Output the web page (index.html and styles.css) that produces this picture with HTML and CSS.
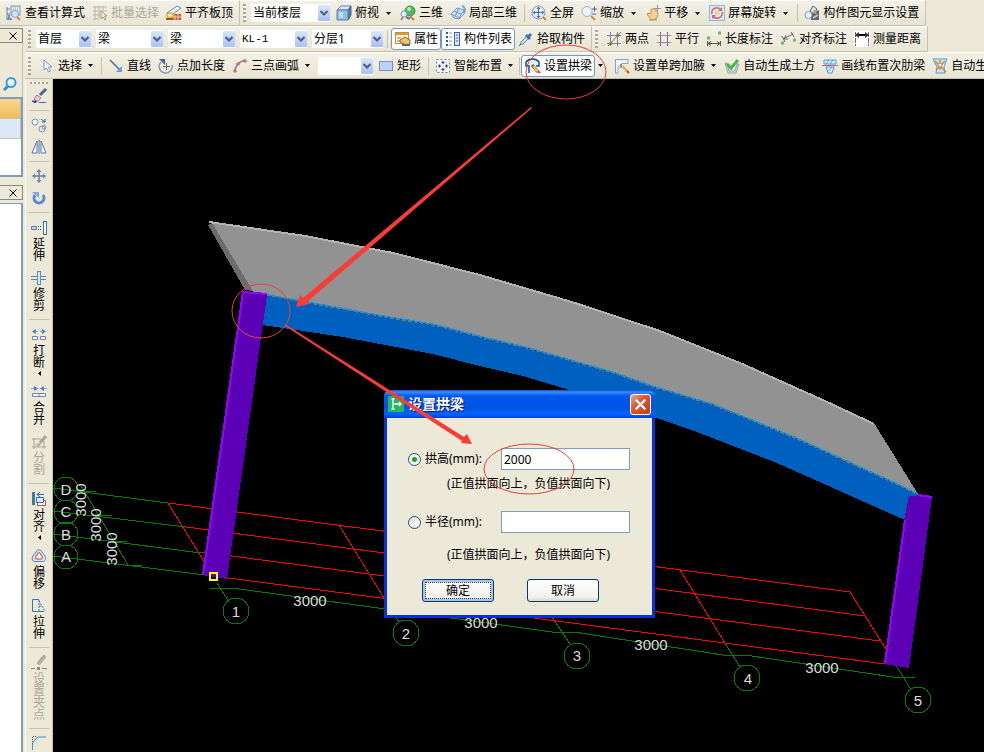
FILE: index.html
```html
<!DOCTYPE html>
<html lang="zh-CN">
<head>
    <meta charset="UTF-8">
    <meta name="viewport" content="width=device-width, initial-scale=1.0">
    <title>设置拱梁</title>
    <link rel="stylesheet" href="styles.css">
</head>
<body>
    <!-- Shared shapes -->
    <svg class="defs" aria-hidden="true">
        <defs>
            <linearGradient id="chevBg" x1="0" y1="0" x2="0" y2="1">
                <stop offset="0" stop-color="#dbe6fd"/>
                <stop offset="1" stop-color="#a9c0f3"/>
            </linearGradient>
            <symbol id="chev" viewBox="0 0 12 16">
                <rect x="0" y="0" width="12" height="16" rx="1" fill="url(#chevBg)"/>
                <path d="M2.500 6l3.500 3.500L9.500 6" fill="none" stroke="#4d6185" stroke-width="2.200"/>
            </symbol>
            <symbol id="down" viewBox="0 0 5 3"><path d="M0 0h5L2.500 3z" fill="#000"/></symbol>
            <symbol id="left" viewBox="0 0 3 5"><path d="M3 0v5L0 2.500z" fill="#000"/></symbol>
            <symbol id="cross" viewBox="0 0 8 8"><path d="M.5.5l7 7M7.500.5l-7 7" stroke="#000" fill="none"/></symbol>
        </defs>
    </svg>

    <div class="toolbar-row top-row">
        <div class="toolbar first">
            <button type="button" class="tool">
                <svg class="icon" viewBox="0 0 16 16"><path d="M1 2v13M1 14h4M1 4h3M1 9h3" stroke="#5c83b8" fill="none"/><rect x="5" y="1" width="9" height="9" fill="#e8edf5" stroke="#7e92b0"/><path d="M7 3h1M9 3h1M11 3h1M7 5h1M9 5h1M11 5h1" stroke="#8a94a8"/><circle cx="9" cy="9" r="3.500" fill="#cfe4fa" stroke="#7d9cc4"/><path d="M11 12l3 3" stroke="#d18b3f" stroke-width="2"/><path d="M3 10v4h3" stroke="#6c92c6" fill="none" stroke-width="2"/></svg>
                查看计算式
            </button>
            <button type="button" class="tool" disabled>
                <svg class="icon" viewBox="0 0 16 16"><path d="M1 2h14M1 6h14M1 10h7M1 14h6M3 1v14M7 1v12M11 1v5" stroke="#bab7a7" fill="none"/><path d="M9 6v8l2-2 2 3 1-1-1.500-3H15z" fill="#ece9d8" stroke="#a09d8c"/></svg>
                批量选择
            </button>
            <button type="button" class="tool">
                <svg class="icon" viewBox="0 0 16 16"><path d="M1 8L11 1l4 2-8 6z" fill="#f4f8fc" stroke="#5d86ad"/><path d="M1 8h6v5H1z" fill="#f7cf58" stroke="#d99b22"/><path d="M2 9h4v2H2z" fill="#fff6c9"/><path d="M8 9h7v6H7z" fill="#c65a33"/><path d="M9 10v5M12 9v6M7 12h8" stroke="#f2cdb8"/><path d="M0 14h7" stroke="#8a5a3c" stroke-width="2"/></svg>
                平齐板顶
            </button>
        </div>
        <div class="toolbar">
            <span class="grip"></span>
            <span class="combo w-floor">
                <select aria-label="楼层范围"><option>当前楼层</option></select>
                <svg><use href="#chev"/></svg>
            </span>
            <button type="button" class="tool">
                <svg class="icon" viewBox="0 0 16 16"><path d="M1 5l4-4h10l-3 4z" fill="#d9ecfa" stroke="#5a7ea8"/><path d="M12 5l3-4v9l-3 5z" fill="#4b7bb0" stroke="#46668f"/><path d="M1 5h11v10H1z" fill="#8fc0e8" stroke="#5a7ea8"/><path d="M3 7h4v6H3z" fill="#b9dcf5"/></svg>
                俯视
                <svg class="arrow"><use href="#down"/></svg>
            </button>
            <button type="button" class="tool">
                <svg class="icon" viewBox="0 0 16 16"><circle cx="10" cy="6" r="5" fill="#57b75e" stroke="#3a9148"/><circle cx="9" cy="4" r="2" fill="#b9edb4"/><circle cx="4" cy="9" r="3" fill="#dcecf9" stroke="#7e9fc4"/><path d="M3 12l-2 3M10 11l4 4" stroke="#c9823c" stroke-width="2"/><path d="M6 12l4 2" stroke="#4a7dc2" stroke-width="2"/></svg>
                三维
            </button>
            <button type="button" class="tool">
                <svg class="icon" viewBox="0 0 16 16"><path d="M1 9l6-6 7 2-5 8z" fill="#cfe3f7" stroke="#6a96c5"/><path d="M4 6l7 3M9 3l-4 8M1 9l3 4 5 1 5-5V5" stroke="#6a96c5" fill="none"/><path d="M12 1c3 1 4 4 2 7" stroke="#78a7d5" fill="none" stroke-width="2"/></svg>
                局部三维
            </button>
            <span class="sep"></span>
            <button type="button" class="tool">
                <svg class="icon" viewBox="0 0 16 16"><circle cx="7.500" cy="7.500" r="6.500" fill="#e2edfb" stroke="#8a9cbd"/><path d="M7.500 3v9M3 7.500h9" stroke="#4a70b2"/><path d="M7.500 1.500l-2 2.500h4zM7.500 13.500l-2-2.500h4zM1.500 7.500L4 5.500v4zM13.500 7.500L11 5.500v4z" fill="#4a70b2"/><path d="M12 12l3 3" stroke="#c88a4a" stroke-width="2"/></svg>
                全屏
            </button>
            <button type="button" class="tool">
                <svg class="icon" viewBox="0 0 16 16"><circle cx="6" cy="6.500" r="5" fill="#eef5fd" stroke="#9fb1cb"/><path d="M10 11l4 4" stroke="#d08a44" stroke-width="2"/><path d="M11 4h5M13.500 1.500v5M11 9h4" stroke="#3f68aa"/></svg>
                缩放
                <svg class="arrow"><use href="#down"/></svg>
            </button>
            <button type="button" class="tool">
                <svg class="icon" viewBox="0 0 16 16"><path d="M2 9l2-1 2 1V4l2 0 1-1 1 2 2 0 1 5-2 4-5 1z" fill="#f3cf8e" stroke="#c49a5e"/><path d="M10 3.500h6M12.500 0v7" stroke="#8895aa"/><path d="M4 15h8" stroke="#b89a69"/></svg>
                平移
                <svg class="arrow"><use href="#down"/></svg>
            </button>
            <button type="button" class="tool">
                <svg class="icon" viewBox="0 0 16 16"><rect x=".5" y=".5" width="15" height="15" fill="#cfeaf9" stroke="#7fbfe6"/><path d="M3 9a5 5 0 0 1 9-4M13 7a5 5 0 0 1-9 4" stroke="#e86060" fill="none" stroke-width="1.500"/><path d="M13 2v4H9zM3 14v-4h4z" fill="#e86060"/><circle cx="8" cy="8" r="2" fill="#f6d269"/></svg>
                屏幕旋转
                <svg class="arrow"><use href="#down"/></svg>
            </button>
            <span class="sep"></span>
            <button type="button" class="tool">
                <svg class="icon" viewBox="0 0 16 16"><path d="M9 1l4 3-3 5-4-3z" fill="#dbe6f2" stroke="#4a6288"/><path d="M7 9l8-4v10H7z" fill="#54688a"/><path d="M9 13l5-3" stroke="#e7c77e" stroke-width="2"/><circle cx="4.500" cy="10" r="3.500" fill="#edf6fd" stroke="#7d9cc4"/><path d="M10 5l2 4" stroke="#dd9a3a" stroke-width="2"/></svg>
                构件图元显示设置
            </button>
        </div>
    </div>

    <div class="workspace">
        <div class="dock">
            <div class="dock-head"><button type="button" class="dock-close" aria-label="关闭"><svg><use href="#cross"/></svg></button></div>
            <div class="dock-tools">
                <button type="button" class="dock-search" aria-label="搜索">
                    <svg viewBox="0 0 16 16"><circle cx="9" cy="6.500" r="4.500" fill="#e9f5fe" stroke="#3b9be0" stroke-width="2"/><path d="M6 10l-4 4" stroke="#3b8fd4" stroke-width="3"/></svg>
                </button>
            </div>
            <ul class="dock-list">
                <li class="active"></li>
                <li></li>
            </ul>
            <div class="dock-head second"><button type="button" class="dock-close" aria-label="关闭"><svg><use href="#cross"/></svg></button></div>
            <div class="dock-body"></div>
        </div>

        <div class="main">
            <div class="toolbar-row">
                <div class="toolbar">
                    <span class="grip"></span>
                    <span class="combo w-s"><select aria-label="楼层"><option>首层</option></select><svg><use href="#chev"/></svg></span>
                    <span class="combo w-m"><select aria-label="构件类别"><option>梁</option></select><svg><use href="#chev"/></svg></span>
                    <span class="combo w-m"><select aria-label="构件类型"><option>梁</option></select><svg><use href="#chev"/></svg></span>
                    <span class="combo w-m mono"><select aria-label="构件名称"><option>KL-1</option></select><svg><use href="#chev"/></svg></span>
                    <span class="combo w-l"><select aria-label="分层"><option>分层1</option></select><svg><use href="#chev"/></svg></span>
                    <span class="sep"></span>
                    <button type="button" class="tool pressed">
                        <svg class="icon" viewBox="0 0 16 16"><rect x=".5" y="1.500" width="13" height="11" fill="#fbf2d8" stroke="#c09048"/><path d="M1 3h12" stroke="#e79a32" stroke-width="2"/><path d="M2 7h4M2 10h3" stroke="#8a8fa0"/><path d="M5 9l5-3 5 3v4l-4 1-6-3z" fill="#edc169" stroke="#9b6b28"/><path d="M7 14h8" stroke="#456a9d" stroke-width="2"/></svg>
                        属性
                    </button>
                    <button type="button" class="tool pressed">
                        <svg class="icon" viewBox="0 0 16 16"><path d="M1 2h2M1 6h2M1 10h2M1 14h2" stroke="#2e5aa5" stroke-width="2"/><path d="M4 2h3M4 6h3M4 10h3M4 14h3" stroke="#8a98b0"/><rect x="9.500" y="1.500" width="5" height="13" fill="#dfe9f8" stroke="#3763ac"/><path d="M11 4h2M11 7h2M11 10h2" stroke="#3763ac"/></svg>
                        构件列表
                    </button>
                    <button type="button" class="tool">
                        <svg class="icon" viewBox="0 0 16 16"><path d="M2 14l1-3 6-6 2 2-6 6z" fill="#bfe0f7" stroke="#5d8fc2"/><path d="M8 4l4 4M10 6l3-3" stroke="#4474b0" stroke-width="3"/><path d="M1 15l2-2" stroke="#3a79bf"/></svg>
                        拾取构件
                    </button>
                </div>
                <div class="toolbar">
                    <span class="grip"></span>
                    <button type="button" class="tool">
                        <svg class="icon" viewBox="0 0 16 16"><path d="M4.500 1v14M11.500 1v14M1 4.500h14M1 12.500h14" stroke="#7885a5"/><path d="M2 15L15 1" stroke="#d94a4a"/><circle cx="4.500" cy="12.500" r="1.500" fill="#3e9a45"/><circle cx="11.500" cy="4.500" r="1.500" fill="#3e9a45"/></svg>
                        两点
                    </button>
                    <button type="button" class="tool">
                        <svg class="icon" viewBox="0 0 16 16"><path d="M4.500 1v14M11.500 1v14" stroke="#5571b5"/><path d="M1 4.500h14M1 11.500h14" stroke="#c97a7a"/></svg>
                        平行
                    </button>
                    <button type="button" class="tool">
                        <svg class="icon" viewBox="0 0 16 16"><path d="M1.500 10v5M14.500 10v5M2 12.500h12M5 10.500l-3 2 3 2M11 10.500l3 2-3 2" stroke="#555" fill="none"/><path d="M1 7h3M12 2h3" stroke="#63bd6a" stroke-width="3"/></svg>
                        长度标注
                    </button>
                    <button type="button" class="tool">
                        <svg class="icon" viewBox="0 0 16 16"><path d="M3 8l10-5M2 5l3 6M11 1l3 5M6 4l-2 4 4 0" stroke="#666" fill="none"/><path d="M1 12h3M13 9h3" stroke="#63bd6a" stroke-width="3"/></svg>
                        对齐标注
                    </button>
                    <button type="button" class="tool">
                        <svg class="icon" viewBox="0 0 16 16"><rect width="16" height="16" fill="#fff"/><path d="M1.500 1v14M14.500 1v14" stroke="#666" stroke-dasharray="5 1"/><path d="M2 4h12" stroke="#000" stroke-width="2"/><path d="M5 1L1 4l4 3zM11 1l4 3-4 3z" fill="#333"/></svg>
                        测量距离
                    </button>
                </div>
            </div>

            <div class="toolbar-row last-row">
                <div class="toolbar wide">
                    <span class="grip"></span>
                    <button type="button" class="tool">
                        <svg class="icon" viewBox="0 0 16 16"><path d="M5 2v10l2.500-2 2 4 2-1-2-4H13z" fill="#f7fafd" stroke="#8296b5"/></svg>
                        选择
                        <svg class="arrow"><use href="#down"/></svg>
                    </button>
                    <span class="sep"></span>
                    <button type="button" class="tool">
                        <svg class="icon" viewBox="0 0 16 16"><path d="M2 2l10 10" stroke="#50699c" stroke-width="1.500"/><path d="M14 8v6H8z" fill="#6f9bd8"/></svg>
                        直线
                    </button>
                    <button type="button" class="tool">
                        <svg class="icon" viewBox="0 0 16 16"><path d="M3 4a6.500 6.500 0 1 0 11 3" stroke="#7f9dcc" fill="none" stroke-width="1.500"/><path d="M1 1h6v6z" fill="#44679f"/><path d="M8.500 5v7M5 8.500h7" stroke="#666"/></svg>
                        点加长度
                    </button>
                    <button type="button" class="tool">
                        <svg class="icon" viewBox="0 0 16 16"><path d="M3 14C3 8 6 4 13 2" stroke="#6b83ad" fill="none" stroke-width="1.500"/><circle cx="3" cy="13" r="1.800" fill="#e06b5b"/><circle cx="6" cy="6" r="1.800" fill="#e06b5b"/><circle cx="13" cy="3" r="1.800" fill="#e06b5b"/></svg>
                        三点画弧
                        <svg class="arrow"><use href="#down"/></svg>
                    </button>
                    <span class="combo w-s blank"><select aria-label="画弧方式"><option></option></select><svg><use href="#chev"/></svg></span>
                    <button type="button" class="tool">
                        <svg class="icon" viewBox="0 0 16 16"><rect x="1.500" y="3.500" width="13" height="9" fill="#bcd2fa" stroke="#6f92d2"/></svg>
                        矩形
                    </button>
                    <span class="sep"></span>
                    <button type="button" class="tool">
                        <svg class="icon" viewBox="0 0 16 16"><rect x="1.500" y="1.500" width="13" height="13" fill="#eef3fb" stroke="#6f7f9c" stroke-dasharray="2 2"/><path d="M8 3v3M8 10v3M3 8h3M10 8h3M6.500 4.500h3M6.500 11.500h3M4.500 6.500v3M11.500 6.500v3" stroke="#33415c"/></svg>
                        智能布置
                        <svg class="arrow"><use href="#down"/></svg>
                    </button>
                    <span class="sep narrow"></span>
                    <button type="button" class="tool pressed">
                        <svg class="icon" viewBox="0 0 16 16"><path d="M4 15V8L1 8V4c3-4 10-4 13 0v4h-3" fill="#e6f2fc" stroke="#1a4c94" stroke-width="1.500"/><path d="M7 7l6 7" stroke="#7a4a20" stroke-width="3"/><path d="M8 8l5 6" stroke="#f6c653" stroke-width="2"/><path d="M13 13l2 2" stroke="#cf4646" stroke-width="2"/></svg>
                        设置拱梁
                    </button>
                    <svg class="arrow split"><use href="#down"/></svg>
                    <button type="button" class="tool">
                        <svg class="icon" viewBox="0 0 16 16"><path d="M1.500 15V1.500H14v4H8L4 9v6z" fill="#eef5fc" stroke="#86a2c6"/><path d="M8 8l6 6" stroke="#e5b34d" stroke-width="2.500"/><path d="M13 13l2 2" stroke="#cf4646" stroke-width="2"/><path d="M7 6v4" stroke="#2e5aa5"/></svg>
                        设置单跨加腋
                        <svg class="arrow"><use href="#down"/></svg>
                    </button>
                    <button type="button" class="tool">
                        <svg class="icon" viewBox="0 0 16 16"><path d="M1 5h2l2 8h6l2-7h2l-3 9H4z" fill="#d7dce0" stroke="#9aa4ad"/><path d="M3 6l4 4 7-8" stroke="#48b84c" stroke-width="3" fill="none"/></svg>
                        自动生成土方
                    </button>
                    <button type="button" class="tool">
                        <svg class="icon" viewBox="0 0 16 16"><path d="M2 2h12v4H2zM4 9h8l-2 6H6z" fill="#d9edfb" stroke="#4f9bd6"/><path d="M4 6l3-4M8 6l3-4M6 13l4-4" stroke="#4f9bd6"/><path d="M0 7.500h16" stroke="#b06a6a"/></svg>
                        画线布置次肋梁
                    </button>
                    <button type="button" class="tool">
                        <svg class="icon" viewBox="0 0 16 16"><path d="M1 1h14l-3 8 1 6H4l1-6z" fill="#cde7fa" stroke="#4f9bd6"/><path d="M3 3l11 11M13 3L4 12M8 2v10" stroke="#d08a3c" stroke-width="1.500"/><circle cx="8" cy="7" r="2" fill="#fff" stroke="#d07a2a"/></svg>
                        自动生
                    </button>
                </div>
            </div>

            <div class="stage">
                <div class="side-tools">
                    <span class="grip-h"></span>
                    <button type="button" class="side" aria-label="格式刷"><svg class="icon" viewBox="0 0 16 16"><path d="M15 1L9 7" stroke="#47659a" stroke-width="3"/><path d="M6 7l4 3-4 4-3-3z" fill="#f3c9dc" stroke="#b4679a"/><path d="M1 13h5l-2 2zM8 14.500h7" stroke="#3a6bb5"/></svg></button>
                    <span class="hsep"></span>
                    <button type="button" class="side" aria-label="复制"><svg class="icon" viewBox="0 0 16 16"><circle cx="4" cy="5" r="3" fill="#f5f6f8" stroke="#8b94a8"/><circle cx="11" cy="12" r="3" fill="#dfe7f4" stroke="#8b94a8"/><circle cx="13" cy="10" r="2" fill="none" stroke="#8b94a8"/><path d="M10 2l4 3M14 2v3h-3" stroke="#3763ac" fill="none"/></svg></button>
                    <button type="button" class="side" aria-label="镜像"><svg class="icon" viewBox="0 0 16 16"><path d="M6 2v12H1zM10 2v12h5z" fill="#f3f6fb" stroke="#5877b0"/><path d="M8 1v14" stroke="#5877b0"/></svg></button>
                    <span class="hsep"></span>
                    <button type="button" class="side" aria-label="移动"><svg class="icon" viewBox="0 0 16 16"><path d="M8 2v12M2 8h12" stroke="#6a7fa8" stroke-width="1.500"/><path d="M8 1L5.500 4h5zM8 15l-2.500-3h5zM1 8l3-2.500v5zM15 8l-3-2.500v5z" fill="#6a7fa8"/></svg></button>
                    <button type="button" class="side" aria-label="旋转"><svg class="icon" viewBox="0 0 16 16"><path d="M4 5a5 5 0 1 0 8 0" stroke="#5b8ad6" fill="none" stroke-width="3"/><path d="M1 2h7v6z" fill="#7ea7e6"/></svg></button>
                    <span class="hsep"></span>
                    <button type="button" class="side"><svg class="icon" viewBox="0 0 16 16"><path d="M.5 6.500h5v3h-5z" fill="#bcd0f0" stroke="#5b82b8"/><path d="M7 6.500h4M7 9.500h4" stroke="#444" stroke-dasharray="1 1"/><rect x="12.500" y="1.500" width="3" height="13" fill="#fff" stroke="#3a77ad"/></svg><span>延伸</span></button>
                    <button type="button" class="side"><svg class="icon" viewBox="0 0 16 16"><path d="M0 6.500h6M0 9.500h6M10 6.500h5M10 9.500h5" stroke="#5f82a8"/><rect x="6.500" y="1.500" width="3" height="13" fill="#d8e6f7" stroke="#5b93c8"/></svg><span>修剪</span></button>
                    <span class="hsep"></span>
                    <button type="button" class="side"><svg class="icon" viewBox="0 0 16 16"><path d="M3 2l4 2.500L3 7zM13 2L9 4.500 13 7z" transform="matrix(-1 0 0 1 8 0)" fill="none"/><path d="M5 2L1 4.500 5 7zM11 2l4 2.500L11 7z" fill="#4d78cb"/><path d="M4 4.500h3M9 4.500h3" stroke="#7c9ddc"/><path d="M1.500 9.500h5v3h-5zM9.500 9.500h5v3h-5z" fill="#f6f9fd" stroke="#7183b5"/></svg><span>打断</span><svg class="arrow-v"><use href="#left"/></svg></button>
                    <button type="button" class="side"><svg class="icon" viewBox="0 0 16 16"><path d="M3 2l4 2.500L3 7zM13 2L9 4.500 13 7z" fill="#4d78cb"/><path d="M0 4.500h3M13 4.500h3" stroke="#7c9ddc"/><path d="M1.500 9.500h13v3h-13zM8 9v4" fill="#f6f9fd" stroke="#7183b5"/></svg><span>合并</span></button>
                    <button type="button" class="side" disabled><svg class="icon" viewBox="0 0 16 16"><path d="M1 5h9M1 13h14M3 4v11M13 7v8" stroke="#aaa796"/><path d="M6 12l9-10" stroke="#aaa796" stroke-width="3"/><path d="M4 12l5-4" stroke="#d2cfc0" stroke-width="2"/></svg><span>分割</span></button>
                    <span class="hsep"></span>
                    <button type="button" class="side"><svg class="icon" viewBox="0 0 16 16"><path d="M2.500 1v13" stroke="#4377a8" stroke-width="3"/><path d="M6 3.500h7M9 1L6 3.500 9 6" stroke="#3763ac" fill="none"/><path d="M6.500 9.500h8v5h-8z" fill="#fff" stroke="#bb4b55"/><path d="M5.500 6.500h7v5h-7z" fill="#dde9fa" stroke="#3565ce"/></svg><span>对齐</span><svg class="arrow-v"><use href="#left"/></svg></button>
                    <button type="button" class="side"><svg class="icon" viewBox="0 0 16 16"><path d="M5 4c1-3 5-3 6 0l3 4c2 4-1 6-3 5.500H5C2 14 0 11 2 8z" fill="#d5e5f7" stroke="#5d86b8"/><path d="M6.500 6c1-2 2-2 3 0l2 3c0 2-1 2-3.500 2S4 11 4.500 9z" fill="#fff" stroke="#d97878" stroke-width="1.500"/></svg><span>偏移</span></button>
                    <button type="button" class="side"><svg class="icon" viewBox="0 0 16 16"><path d="M8 1.500H1.500v12H13" stroke="#3e78b0" fill="none"/><path d="M8 2v11M8 3l6 10M8 8h3" stroke="#3e78b0" stroke-dasharray="2 1"/></svg><span>拉伸</span></button>
                    <span class="hsep"></span>
                    <button type="button" class="side" disabled><svg class="icon" viewBox="0 0 16 16"><path d="M8 8l5-6" stroke="#b3b0a2" stroke-width="4" stroke-linecap="round"/><path d="M0 13.500h4M11 13.500h5" stroke="#8f8c7d"/><path d="M6 12h3v3H6z" fill="#8f8c7d"/></svg><span>设置夹点</span></button>
                    <span class="hsep"></span>
                    <button type="button" class="side" aria-label="倒角"><svg class="icon" viewBox="0 0 16 16"><path d="M1.500 15V8l5-6H15" stroke="#4a8fd6" fill="none"/><path d="M1.500 7V1.500H6" stroke="#555" stroke-dasharray="1 1" fill="none"/></svg></button>
                </div>

                <div class="canvas">
                    <svg class="model" role="img" aria-label="三维模型">
                        <g transform="translate(-53 -79)">
                            <!-- Axis grid -->
                            <g class="axis">
                                <path d="M53 488L168 503M53 511L186 527M53 534L201 553M53 556L213 576"/>
                                <path d="M80 484L128 565M82 491h14M97 515h15M112 541h15M127 565h15"/>
                                <path d="M210 588h22L393 610L552 632h22L723 655h22L893 677h22"/>
                                <path d="M217 583L229 602M388 606L399 622M554 620L570 644M725 643L740 667M896 665L911 690"/>
                            </g>
                            <g class="grid">
                                <path d="M168 503L850 592M186 527L865 616M201 552L880 641M213 576L885 664"/>
                                <path d="M168 503L213 576M339 525L384 598M509 547L554 620M680 570L725 643M850 592L896 665"/>
                            </g>
                            <g class="bubble">
                                <circle cx="66" cy="489" r="12"/><circle cx="66" cy="512" r="12"/><circle cx="66" cy="534" r="12"/><circle cx="66" cy="557" r="12"/>
                                <circle cx="236" cy="611" r="13"/><circle cx="406" cy="633" r="13"/><circle cx="577" cy="656" r="13"/><circle cx="747" cy="678" r="13"/><circle cx="918" cy="700" r="13"/>
                            </g>
                            <g class="mark">
                                <text x="66" y="495">D</text><text x="66" y="517">C</text><text x="66" y="540">B</text><text x="66" y="562">A</text>
                                <text x="236" y="617">1</text><text x="406" y="639">2</text><text x="577" y="661">3</text><text x="748" y="684">4</text><text x="918" y="706">5</text>
                                <text x="310" y="606">3000</text><text x="481" y="628">3000</text><text x="651" y="650">3000</text><text x="822" y="673">3000</text>
                                <text transform="translate(86 500) rotate(-90)">3000</text>
                                <text transform="translate(101 525) rotate(-90)">3000</text>
                                <text transform="translate(117 549) rotate(-90)">3000</text>
                            </g>
                            <!-- Slab -->
                            <path fill="#929292" d="M209 221L305 235L393 252L480 274L575 302L660 330L740 362L825 400L874 423L918 494L900 485L797 438L713 404L653 386L613 372L530 348L480 336L433 324L390 317L303 301L253 292z"/>
                            <path fill="none" stroke="#b4b4b4" stroke-width="2" d="M209 222L305 236L393 253L480 275L575 303L660 331L740 363L825 401L874 424"/>
                            <path fill="#6c6c6c" d="M208 225L212 223L253 291L245 290z"/>
                            <!-- Arch beam -->
                            <path fill="#0060c0" d="M253 292L303 301L390 317L433 324L480 336L530 348L613 372L653 386L713 404L797 438L900 485L918 494L905 520L777 463L697 432L657 418L563 388L523 376L480 366L433 354L343 337L263 325z"/>
                            <path fill="none" stroke="#0098f8" d="M253 292L303 301L390 317L433 324L480 336L530 348L613 372L653 386L713 404L797 438L900 485L918 494"/>
                            <path fill="none" stroke="#8a7450" stroke-dasharray="4 2" d="M260 294L303 302L390 318L433 325L480 337L530 349L613 373L653 387L713 405L797 439L900 486L918 495"/>
                            <!-- Columns -->
                            <path fill="#5c00b8" d="M242 291L267 295L227 579L203 575z"/>
                            <path fill="none" stroke="#9900ff" stroke-width="2" d="M267 294L243 292L203 575"/>
                            <path fill="#5c00b8" d="M909 496L932 497L909 668L884 664L904 520z"/>
                            <path fill="none" stroke="#9900ff" stroke-width="2" d="M918 495L932 497M905 520L885 663"/>
                            <path fill="none" stroke="#ff0" stroke-width="2" d="M210 573h7v7h-7z"/>
                        </g>
                    </svg>

                    <form class="dialog" role="dialog" aria-labelledby="dialogTitle">
                        <div class="dialog-title">
                            <svg class="icon" viewBox="0 0 16 16"><rect width="16" height="16" rx="1" fill="#26b765"/><path d="M5 3v10M3.500 3h3M3.500 13h3M5 8h8M11 6l2 2-2 2" stroke="#fff" fill="none" stroke-width="1.300"/></svg>
                            <h1 id="dialogTitle">设置拱梁</h1>
                            <button type="button" class="dialog-close" aria-label="关闭">
                                <svg viewBox="0 0 12 12"><path d="M1.500 1.500l9 9M10.500 1.500l-9 9" stroke="#fff" stroke-width="2"/></svg>
                            </button>
                        </div>
                        <div class="dialog-body">
                            <div class="field">
                                <label><input type="radio" name="mode" checked>拱高(mm):</label>
                                <input type="text" class="text" aria-label="拱高" value="2000">
                            </div>
                            <p class="note">(正值拱面向上，负值拱面向下)</p>
                            <div class="field radius">
                                <label><input type="radio" name="mode">半径(mm):</label>
                                <input type="text" class="text" aria-label="半径">
                            </div>
                            <p class="note radius">(正值拱面向上，负值拱面向下)</p>
                            <div class="actions">
                                <button type="submit" class="btn default">确定</button>
                                <button type="button" class="btn">取消</button>
                            </div>
                        </div>
                    </form>
                </div>
            </div>
        </div>
    </div>

    <!-- Red guide marks over the window -->
    <svg class="guides" aria-hidden="true">
        <ellipse cx="566" cy="72" rx="40" ry="27"/>
        <ellipse cx="261" cy="311" rx="29" ry="27"/>
        <ellipse cx="529" cy="469" rx="45" ry="25"/>
        <path d="M531 107L303 298L300 295L296 307L309 304L307 302L532 108z"/>
        <path d="M285 324L464 437L467 434L472 444L461 443L462 441L285 326z"/>
    </svg>
</body>
</html>
```

FILE: styles.css
```css
* {
    margin: 0;
    padding: 0;
    box-sizing: border-box;
}

body {
    display: flex;
    flex-direction: column;
    height: 100vh;
    overflow: hidden;
    position: relative;
    background: #ece9d8;
    color: #000;
    font-family: "Noto Sans", "Noto Sans CJK SC", sans-serif;
    font-size: 12px;
    line-height: 16px;
}

button,
select,
input {
    font: inherit;
    color: inherit;
}

button {
    background: none;
    border: none;
}

.defs {
    position: absolute;
    width: 0;
    height: 0;
}

.icon {
    width: 16px;
    height: 16px;
    flex: none;
}

/* Toolbars */
.toolbar-row {
    display: flex;
    flex: none;
    height: 26px;
    overflow: hidden;
}

.toolbar {
    display: flex;
    align-items: center;
    flex: none;
    padding: 0 2px;
    background: linear-gradient(#f3f1e6, #e9e5d3);
    border-right: 1px solid #c5c2b2;
    border-bottom: 1px solid #c5c2b2;
    border-top: 1px solid #fff;
}

.toolbar.first {
    padding-left: 3px;
}

.toolbar.wide {
    min-width: 100%;
}

.grip {
    width: 3px;
    height: 18px;
    margin: 0 5px 0 1px;
    background: repeating-linear-gradient(#a9a693 0 2px, #f6f4ea 2px 4px);
}

.sep {
    width: 1px;
    height: 18px;
    margin: 0 3px;
    background: #c5c2b2;
}

.sep.narrow {
    margin: 0 1px;
}

.tool {
    display: flex;
    align-items: center;
    gap: 3px;
    flex: none;
    height: 22px;
    padding: 0 4px 0 3px;
    border: 0 solid #7f9db9;
    white-space: nowrap;
}

.tool:disabled,
.side:disabled {
    color: #aca899;
}

.tool.pressed {
    padding: 0 2px 0 3px;
    background: #fff;
    border: 1px solid #7b98b8;
    border-radius: 3px;
}

.arrow {
    width: 5px;
    height: 3px;
    margin: 0 2px 0 4px;
}

.last-row .arrow {
    margin: 0 1px 0 3px;
}

.last-row .arrow.split {
    margin: 0 8px 0 3px;
}

.combo {
    display: grid;
    align-items: center;
    flex: none;
    height: 18px;
    margin-right: 5px;
    background: #fff;
}

.combo select {
    grid-area: 1 / 1;
    width: 100%;
    height: 18px;
    padding-left: 2px;
    border: none;
    background: none;
    appearance: none;
}

.combo svg {
    grid-area: 1 / 1;
    justify-self: end;
    width: 12px;
    height: 16px;
    pointer-events: none;
}

.combo.mono {
    font-family: "Liberation Mono", monospace;
    font-size: 11px;
}

.combo.blank {
    margin: 0 2px 0 3px;
}

.w-floor {
    width: 79px;
    margin-right: 3px;
}

.w-s {
    width: 55px;
}

.w-m {
    width: 67px;
}

.w-l {
    width: 71px;
    margin-right: 1px;
}

/* Left dock */
.workspace {
    display: flex;
    flex: 1;
    min-height: 0;
}

.dock {
    display: flex;
    flex-direction: column;
    flex: none;
    width: 23px;
    margin-right: 2px;
    padding-top: 2px;
}

.dock-head {
    display: flex;
    justify-content: flex-end;
    align-items: center;
    flex: none;
    height: 15px;
    border: 1px solid #8c8a7e;
    border-left: none;
}

.dock-head.second {
    margin: 8px 0 3px;
}

.dock-close {
    display: flex;
    padding: 0 5px;
}

.dock-close svg {
    width: 8px;
    height: 8px;
}

.dock-tools {
    display: flex;
    align-items: flex-end;
    height: 54px;
    padding: 0 0 5px 2px;
    border-right: 1px solid #c5c2b2;
}

.dock-search svg {
    display: block;
    width: 16px;
    height: 16px;
}

.dock-list {
    height: 80px;
    list-style: none;
    background: #fff;
    border: 2px solid #7f9db9;
    border-left: none;
}

.dock-list li {
    height: 20px;
    border-right: 1px solid #c5c2b2;
    border-bottom: 1px solid #c5c2b2;
    background: #dfe8f6;
}

.dock-list li.active {
    background: linear-gradient(#fbd58e, #f2bb5c);
}

.dock-body {
    flex: 1;
    background: #fff;
    border: 2px solid #7f9db9;
    border-width: 1px 2px 0 0;
}

.main {
    display: flex;
    flex-direction: column;
    flex: 1;
    min-width: 0;
}

.last-row {
    height: 27px;
}

.stage {
    display: flex;
    flex: 1;
    min-height: 0;
}

/* Vertical toolbar */
.side-tools {
    display: flex;
    flex-direction: column;
    align-items: center;
    flex: none;
    width: 28px;
    padding-top: 3px;
    overflow: hidden;
    border-left: 1px solid #fff;
    border-right: 1px solid #c5c2b2;
}

.grip-h {
    flex: none;
    width: 18px;
    height: 2px;
    margin-bottom: 1px;
    background: repeating-linear-gradient(90deg, #a9a693 0 2px, #f6f4ea 2px 4px);
}

.side {
    display: flex;
    flex-direction: column;
    align-items: center;
    gap: 2px;
    flex: none;
    padding: 3px 0;
}

.side:has(span) {
    padding: 4px 0;
}

.side span {
    width: 12px;
    line-height: 12px;
    word-break: break-all;
}

.arrow-v {
    width: 3px;
    height: 5px;
}

.hsep {
    flex: none;
    width: 20px;
    height: 1px;
    margin: 3px 0;
    background: #c5c2b2;
}

/* Drawing area */
.canvas {
    flex: 1;
    min-width: 0;
    position: relative;
    overflow: hidden;
    background: #000;
}

.model {
    display: block;
    width: 100%;
    height: 100%;
    shape-rendering: crispEdges;
}

.axis,
.bubble {
    fill: none;
    stroke: #008000;
}

.grid {
    fill: none;
    stroke: #f00;
}

.mark {
    fill: #dcdcdc;
    font-family: "Liberation Sans", Arial, sans-serif;
    font-size: 15px;
    text-anchor: middle;
}

/* Dialog */
.dialog {
    position: absolute;
    left: 331px;
    top: 311px;
    width: 271px;
    border: 3px solid #0831d9;
    border-top: none;
    border-radius: 6px 6px 0 0;
    background: #ece9d8;
}

.dialog-title {
    display: flex;
    align-items: center;
    gap: 4px;
    height: 28px;
    margin: 0 -3px;
    padding: 0 4px;
    border-radius: 6px 6px 0 0;
    background: linear-gradient(#0a4fd0, #3b8cff 2px, #0058ee 6px, #0054e3 18px, #0066ff 24px, #003dd7);
    color: #fff;
}

.dialog-title h1 {
    flex: 1;
    font-size: 14px;
    font-weight: bold;
    text-shadow: 1px 1px #0f1089;
}

.dialog-close {
    display: grid;
    place-items: center;
    width: 21px;
    height: 21px;
    border: 1px solid #fff;
    border-radius: 3px;
    background: linear-gradient(135deg, #f0a48c, #e2552f 40%, #c23d14);
}

.dialog-close svg {
    width: 13px;
    height: 13px;
}

.dialog-body {
    padding: 30px 22px 13px 21px;
}

.field {
    display: flex;
    align-items: center;
}

.field.radius {
    margin-top: 18px;
}

.field label {
    display: flex;
    align-items: center;
    gap: 4px;
    flex: 1;
}

.field input[type="radio"] {
    width: 13px;
    height: 13px;
    border: 1px solid #1d5281;
    border-radius: 50%;
    background: linear-gradient(135deg, #dcdbd5, #fff);
    appearance: none;
}

.field input[type="radio"]:checked {
    background: radial-gradient(circle, #21a121 0 2px, #f6f6f2 3px);
}

.text {
    width: 129px;
    height: 22px;
    padding: 0 2px;
    border: 1px solid #7f9db9;
    background: #fff;
}

.note {
    margin-top: 5px;
    padding-left: 39px;
    line-height: 18px;
    white-space: nowrap;
}

.note.radius {
    margin-top: 13px;
}

.actions {
    display: flex;
    gap: 33px;
    margin-top: 15px;
    padding-left: 14px;
}

.btn {
    width: 72px;
    height: 23px;
    border: 1px solid #003c74;
    border-radius: 3px;
    background: linear-gradient(#fff, #f3f2ec 80%, #dcd8cc);
}

.btn.default {
    outline: 1px dotted #333;
    outline-offset: -4px;
    box-shadow: inset 0 0 0 2px #a9c3f0;
}

/* Guide marks */
.guides {
    position: absolute;
    left: 0;
    top: 0;
    width: 100%;
    height: 100%;
    pointer-events: none;
}

.guides ellipse {
    fill: none;
    stroke: #e8403c;
}

.guides path {
    fill: #fb3b36;
}
```
